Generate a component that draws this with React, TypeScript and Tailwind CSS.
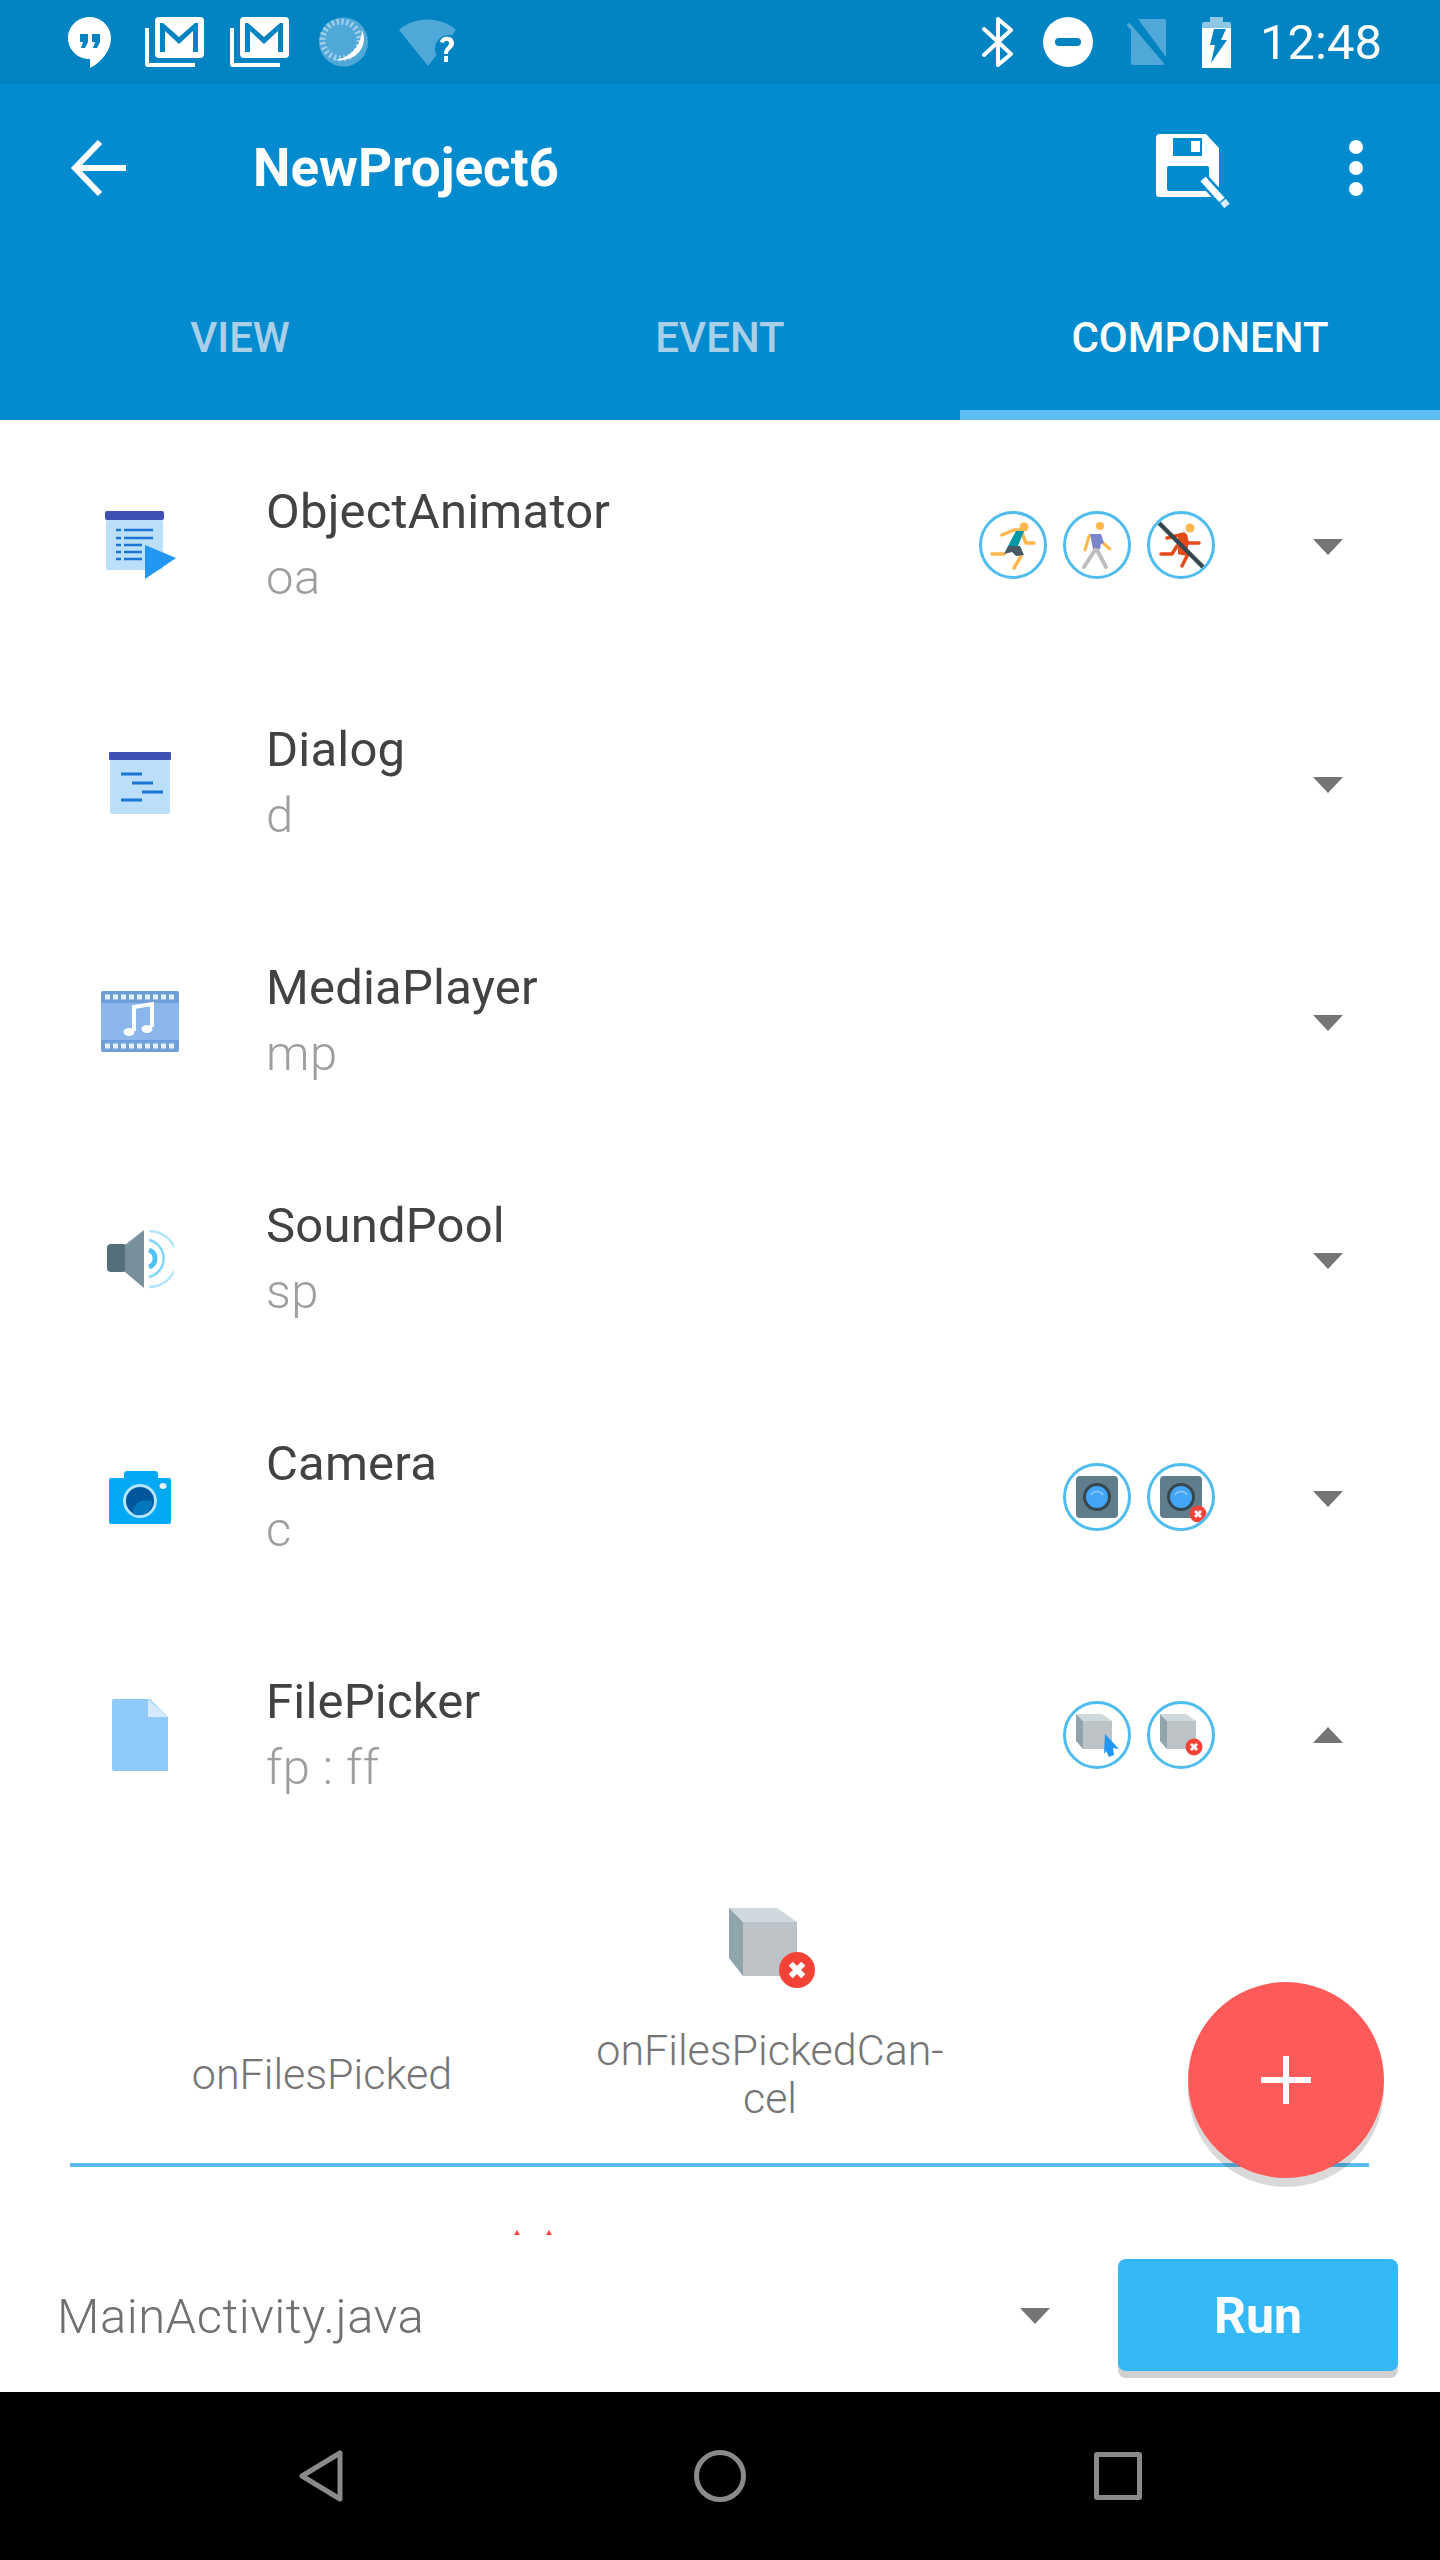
import React from 'react';

const Hangouts = () => (
  <svg width="43" height="51" viewBox="0 0 43 51">
    <path d="M21.5 0C9.6 0 0 9.6 0 21c0 11.6 9.6 21 21 21h1v9c12-6 21-18 21-30C43 9.6 33.400 0 21.500 0z" fill="#fff" />
    <path d="M12 17h8v8l-3 6h-4l2-6h-3zM24 17h8v8l-3 6h-4l2-6h-3z" fill="#0284c3" />
  </svg>
);

const Gmail = () => (
  <svg width="59" height="50" viewBox="0 0 59 50">
    <path d="M0 11h4v35h46v4H3a3 3 0 0 1-3-3z" fill="#fff" />
    <rect x="10" y="0" width="49" height="41" rx="4" fill="#fff" />
    <path d="M15 35V6h3l16 14L50 6h3v29h-5V14L34 27 20 14v21z" fill="#0284c3" />
  </svg>
);

const Sync = () => (
  <svg width="49" height="50" viewBox="0 0 49 50">
    <circle cx="24.500" cy="25" r="24.500" fill="#4fa8d8" />
    <circle cx="22" cy="23" r="18.500" fill="none" stroke="#a3d0ea" strokeWidth="6" strokeDasharray="2.200 2.640" />
    <path d="M43 13C50 28 38 46 15 43C30 42 42 30 43 13z" fill="#fff" />
  </svg>
);

const WifiUnknown = () => (
  <svg width="57" height="47" viewBox="0 0 57 47">
    <path d="M0 11C15 -3 42 -3 57 11L29 47z" fill="#4fa8d8" />
    <circle cx="50" cy="30" r="14" fill="#0284c3" />
    <path d="M41 23c1-7 14-7 14 1 0 6-6 6-6 11h-4c0-7 5-7 5-11 0-3-5-3-5 0z" fill="#fff" />
    <rect x="45" y="37" width="4" height="6" fill="#fff" />
  </svg>
);

const Bluetooth = () => (
  <svg width="31" height="50" viewBox="0 0 31 50" fill="none" stroke="#fff" strokeWidth="4" strokeLinecap="round" strokeLinejoin="round">
    <path d="M2 12l27 25-13 11V2l13 11L2 38" />
  </svg>
);

const Dnd = () => (
  <svg width="50" height="50" viewBox="0 0 50 50">
    <circle cx="25" cy="25" r="25" fill="#fff" />
    <rect x="12" y="21" width="26" height="8" rx="4" fill="#0284c3" />
  </svg>
);

const NoSim = () => (
  <svg width="40" height="46" viewBox="0 0 40 46">
    <path d="M11 0H37a2 2 0 0 1 2 2V38z" fill="#4fa8d8" />
    <path d="M4 8L36 46H6a2 2 0 0 1-2-2z" fill="#4fa8d8" />
    <path d="M1 5l35 41" stroke="#4fa8d8" strokeWidth="3.500" />
  </svg>
);

const Battery = () => (
  <svg width="29" height="51" viewBox="0 0 29 51">
    <path d="M8 0h13v5h6a2 2 0 0 1 2 2v4H0V7a2 2 0 0 1 2-2h6z" fill="#8cc7e5" />
    <path d="M0 11h29v40H0z" fill="#fff" />
    <path d="M12 12h12l-5 11h6L9 46l4-18H8z" fill="#0284c3" />
  </svg>
);

const BackArrow = () => (
  <svg width="56" height="56" viewBox="0 0 56 56" fill="none" stroke="#fff" strokeWidth="6">
    <path d="M56 28H5M30 2 5 28l25 26" />
  </svg>
);

const SaveIcon = () => (
  <svg width="74" height="74" viewBox="0 0 74 74">
    <path d="M4 0h46l13 14v46a3 3 0 0 1-3 3H3a3 3 0 0 1-3-3V4a4 4 0 0 1 4-4z" fill="#fff" />
    <rect x="17" y="4" width="29" height="18" fill="#028bcf" />
    <rect x="35" y="7" width="9" height="11" fill="#fff" />
    <rect x="11" y="32" width="42" height="25" rx="2" fill="#028bcf" />
    <path d="M47 45L71 71" stroke="#028bcf" strokeWidth="12" />
    <path d="M47 45L66 66" stroke="#fff" strokeWidth="7" />
    <path d="M67 67L71 72" stroke="#d6ecf8" strokeWidth="7" />
  </svg>
);

const Ring = ({ children }: { children: React.ReactNode }) => (
  <div className="w-[68px] h-[68px] rounded-full border-[3.5px] border-[#4fbcee] flex items-center justify-center overflow-hidden">
    {children}
  </div>
);

const RedX = ({ x, y, r }: { x: number; y: number; r: number }) => (
  <g>
    <circle cx={x} cy={y} r={r} fill="#f44336" />
    <path
      d={`M${x - r * 0.35} ${y - r * 0.35}L${x + r * 0.35} ${y + r * 0.35}M${x + r * 0.35} ${y - r * 0.35}L${x - r * 0.35} ${y + r * 0.35}`}
      stroke="#fff"
      strokeWidth={r * 0.32}
    />
  </g>
);

const Run = () => (
  <svg width="62" height="62" viewBox="0 0 62 62" fill="none" strokeLinecap="round" strokeLinejoin="round" className="shrink-0">
    <circle cx="42" cy="13" r="4.500" fill="#ffb74d" />
    <path d="M20 21l12-5h6M40 19l4 10h8M10 40h12M39 42l-7 12" stroke="#ffb74d" strokeWidth="3.500" />
    <path d="M34 17h8l-6 15H26z" fill="#0097a7" />
    <path d="M26 32h12l4 9-8 1-4-4-8 2z" fill="#455a64" />
  </svg>
);

const Walk = () => (
  <svg width="62" height="62" viewBox="0 0 62 62" fill="none" strokeLinecap="round" strokeLinejoin="round" className="shrink-0">
    <circle cx="34" cy="12" r="4" fill="#ffb74d" />
    <path d="M23 22l-4 14M37 29l7 6" stroke="#ffb74d" strokeWidth="3" />
    <path d="M24 20h11l3 9-3 1-1 5h-7z" fill="#7986cb" />
    <path d="M29 36l-11 17M31 36l9 17" stroke="#bdbdbd" strokeWidth="4" />
  </svg>
);

const RunOff = () => (
  <svg width="68" height="68" viewBox="0 0 68 68" fill="none" strokeLinecap="round" strokeLinejoin="round" className="-m-[3px] shrink-0">
    <circle cx="43" cy="17" r="4.500" fill="#ffb74d" />
    <path d="M20 27l17-4M40 32h12M14 43h11l5-8M33 42l8 1-6 12" stroke="#e64a19" strokeWidth="3.500" />
    <path d="M31 23h9l2 9-3 11h-8z" fill="#e64a19" />
    <path d="M12 12l45 45" stroke="#37474f" strokeWidth="4.500" strokeLinecap="butt" />
  </svg>
);

const CameraSmall = ({ off }: { off?: boolean }) => (
  <svg width="62" height="62" viewBox="0 0 62 62" className="shrink-0">
    <rect x="10" y="10" width="42" height="42" rx="4" fill="#607d8b" />
    <circle cx="31" cy="31" r="14" fill="#37474f" />
    <circle cx="31" cy="31" r="11" fill="#42a5f5" />
    <path d="M25 29a7 7 0 0 1 12 0" stroke="#90caf9" strokeWidth="1.500" fill="none" />
    {off && <RedX x={48} y={48} r={8.500} />}
  </svg>
);

const Cube = ({ children }: { children?: React.ReactNode }) => (
  <svg width="62" height="62" viewBox="0 0 62 62" className="shrink-0">
    <path d="M10 10h26l10 7H17z" fill="#cfd8dc" />
    <path d="M10 10l7 7v28l-7-8z" fill="#90a4ae" />
    <path d="M17 17h29v28H17z" fill="#bdc3c7" />
    {children}
  </svg>
);

const ObjectAnimatorIcon = () => (
  <svg width="71" height="68" viewBox="0 0 71 68">
    <rect x="1" y="9" width="57" height="50" rx="2" fill="#bbdefb" />
    <rect y="0" width="59" height="9" rx="2" fill="#3f51b5" />
    <path d="M11 19h5M19 19h29M11 27h5M19 27h29M11 34h5M19 34h18M11 41h5M19 41h18M11 48h5M19 48h18" stroke="#1976d2" strokeWidth="2.500" />
    <path d="M40 34l31 13-31 21z" fill="#2196f3" />
  </svg>
);

const DialogIcon = () => (
  <svg width="62" height="62" viewBox="0 0 62 62">
    <rect x="1" y="6" width="60" height="56" rx="2" fill="#bbdefb" />
    <rect y="0" width="62" height="8" rx="1" fill="#3f51b5" />
    <path d="M12 22h21M23 31h21M33 40h21M12 48h21" stroke="#1976d2" strokeWidth="3" />
  </svg>
);

const MediaIcon = () => (
  <svg width="78" height="61" viewBox="0 0 78 61">
    <rect width="78" height="61" rx="2" fill="#6f9fd8" />
    <rect y="12" width="78" height="37" fill="#8ab6ec" />
    <path d="M4 6h72M4 55h72" stroke="#e3effa" strokeWidth="5" strokeDasharray="5 3" />
    <path d="M33 40V16l18-3v23" stroke="#fff" strokeWidth="4" fill="none" />
    <ellipse cx="28" cy="41" rx="5.500" ry="4" fill="#fff" />
    <ellipse cx="46" cy="38" rx="5.500" ry="4" fill="#fff" />
  </svg>
);

const SoundIcon = () => (
  <svg width="67" height="60" viewBox="0 0 67 60">
    <rect y="15" width="20" height="28" rx="4" fill="#546e7a" />
    <path d="M18 16L37 1v58L18 43z" fill="#78909c" />
    <path d="M42 21a9 9 0 0 1 0 17" stroke="#4fc3f7" strokeWidth="5" fill="none" />
    <path d="M42 11a19 19 0 0 1 0 37" stroke="#81d4fa" strokeWidth="2.500" fill="none" />
    <path d="M42 2a28 28 0 0 1 0 56" stroke="#b3e5fc" strokeWidth="2.500" fill="none" />
  </svg>
);

const CameraIcon = () => (
  <svg width="62" height="53" viewBox="0 0 62 53">
    <path d="M15 7V3a3 3 0 0 1 3-3h28a3 3 0 0 1 3 3v4h11a2 2 0 0 1 2 2v42a2 2 0 0 1-2 2H2a2 2 0 0 1-2-2V9a2 2 0 0 1 2-2z" fill="#03a9f4" />
    <circle cx="31" cy="30" r="17" fill="#b3e5fc" />
    <circle cx="31" cy="30" r="14" fill="#01579b" />
    <path d="M24 43c-1-10 8-16 19-13 1 8-8 18-19 13z" fill="#0277bd" />
    <ellipse cx="54" cy="15" rx="3.500" ry="3" fill="#e1f5fe" />
  </svg>
);

const FileIcon = () => (
  <svg width="56" height="72" viewBox="0 0 56 72">
    <path d="M2 0h36l18 18v54H2a2 2 0 0 1-2-2V2a2 2 0 0 1 2-2z" fill="#90caf9" />
    <path d="M36 0l20 18H36z" fill="#d5eafc" />
  </svg>
);

const Caret = ({ up }: { up?: boolean }) => (
  <svg width="30" height="16" viewBox="0 0 30 16">
    <path d={up ? 'M15 0l15 16H0z' : 'M0 0h30L15 16z'} fill="#757575" />
  </svg>
);

const rows = [
  { name: 'ObjectAnimator', sub: 'oa', icon: <ObjectAnimatorIcon />, actions: [<Run />, <Walk />, <RunOff />] },
  { name: 'Dialog', sub: 'd', icon: <DialogIcon />, actions: [] },
  { name: 'MediaPlayer', sub: 'mp', icon: <MediaIcon />, actions: [] },
  { name: 'SoundPool', sub: 'sp', icon: <SoundIcon />, actions: [] },
  { name: 'Camera', sub: 'c', icon: <CameraIcon />, actions: [<CameraSmall />, <CameraSmall off />] },
  {
    name: 'FilePicker',
    sub: 'fp : ff',
    icon: <FileIcon />,
    up: true,
    actions: [
      <Cube>
        <path d="M39 30l14 15-6-1 1 7-5 2-3-6-2 3z" fill="#2196f3" />
      </Cube>,
      <Cube>
        <RedX x={44} y={43} r={8.500} />
      </Cube>,
    ],
  },
];

export default function App() {
  return (
    <div className="relative w-[1440px] h-[2560px] flex flex-col overflow-hidden bg-white font-['Roboto',sans-serif]">
      <div className="h-[84px] bg-[#0284c3] flex items-center shrink-0 pl-[68px] pr-[58px]">
        <Hangouts />
        <div className="ml-[34px]"><Gmail /></div>
        <div className="ml-[26px]"><Gmail /></div>
        <div className="ml-[30px]"><Sync /></div>
        <div className="ml-[31px]"><WifiUnknown /></div>
        <div className="flex-1" />
        <Bluetooth />
        <div className="ml-[30px]"><Dnd /></div>
        <div className="ml-[34px]"><NoSim /></div>
        <div className="ml-[35px]"><Battery /></div>
        <span className="ml-[29px] text-[49px] leading-none text-white">12:48</span>
      </div>

      <div className="h-[168px] bg-[#028bcf] flex items-center shrink-0 pl-[70px] pr-[77px]">
        <BackArrow />
        <span className="ml-[127px] pt-[2px] text-[53px] font-bold text-white flex-1">NewProject6</span>
        <div className="mt-[6px]"><SaveIcon /></div>
        <div className="ml-[119px] flex flex-col gap-[7px]">
          <div className="w-[14px] h-[14px] rounded-full bg-white" />
          <div className="w-[14px] h-[14px] rounded-full bg-white" />
          <div className="w-[14px] h-[14px] rounded-full bg-white" />
        </div>
      </div>

      <div className="h-[168px] bg-[#028bcf] flex shrink-0">
        <div className="w-[480px] pt-[12px] border-b-[10px] border-transparent flex items-center justify-center text-[42px] font-medium text-[#a9cfe9]">VIEW</div>
        <div className="w-[480px] pt-[12px] border-b-[10px] border-transparent flex items-center justify-center text-[42px] font-medium text-[#a9cfe9]">EVENT</div>
        <div className="w-[480px] pt-[12px] border-b-[10px] border-[#5bbdf0] flex items-center justify-center text-[42px] font-medium text-white">COMPONENT</div>
      </div>

      <div className="flex-1 overflow-hidden pt-[6px]">
        {rows.map((row) => (
          <div key={row.name} className="h-[238px] flex items-center pr-[97px]">
            <div className="w-[266px] flex justify-center pl-[14px] shrink-0">{row.icon}</div>
            <div className="flex-1">
              <div className="text-[49px] leading-[66px] tracking-[0.2px] text-[#424242]">{row.name}</div>
              <div className="text-[49px] leading-[66px] font-light tracking-[0.5px] text-[#9e9e9e]">{row.sub}</div>
            </div>
            <div className="flex gap-[16px]">
              {row.actions.map((action, i) => (
                <Ring key={i}>{action}</Ring>
              ))}
            </div>
            <div className={row.up ? 'ml-[98px]' : 'ml-[98px] mt-[3px]'}><Caret up={row.up} /></div>
          </div>
        ))}

        <div className="ml-[70px] mr-[71px] h-[313px] border-b-[4px] border-[#5bbdf0] flex pl-[28px] pt-[54px]">
          <div className="w-[448px] flex flex-col items-center">
            <div className="h-[80px]" />
            <div className="mt-[38px] h-[96px] flex items-center text-center text-[43px] leading-[48px] font-light text-[#757575]">onFilesPicked</div>
          </div>
          <div className="w-[448px] flex flex-col items-center">
            <div className="ml-[4px] w-[86px] h-[80px]">
              <svg width="86" height="80" viewBox="0 0 86 80">
                <path d="M0 0H48L68 14H14z" fill="#cfd8dc" />
                <path d="M0 0L14 14V68L0 50z" fill="#90a4ae" />
                <path d="M14 14H68V68H14z" fill="#bdc3c7" />
                <RedX x={68} y={62} r={18} />
              </svg>
            </div>
            <div className="mt-[38px] h-[96px] text-center text-[43px] leading-[48px] font-light text-[#757575]">
              onFilesPickedCan-
              <br />
              cel
            </div>
          </div>
        </div>

        <div className="mt-[63px] ml-[514px] flex gap-[26px]">
          <svg width="6" height="5" viewBox="0 0 6 5"><path d="M3 0l3 5H0z" fill="#f44336" /></svg>
          <svg width="6" height="5" viewBox="0 0 6 5"><path d="M3 0l3 5H0z" fill="#f44336" /></svg>
        </div>
      </div>

      <div className="absolute left-0 right-0 top-[2235px] h-[157px] bg-white flex items-start pl-[57px] pr-[42px]">
        <span className="mt-[55px] text-[49px] leading-[54px] tracking-[0.5px] font-light text-[#707070] flex-1">MainActivity.java</span>
        <div className="mt-[73px]"><Caret /></div>
        <div className="mt-[24px] ml-[68px] w-[280px] h-[112px] rounded-[8px] bg-[#35b8f7] shadow-[0_7px_0_#d0d0d0] flex items-center justify-center pt-[2px] text-[50px] font-bold text-white">Run</div>
      </div>

      <div className="h-[168px] bg-black flex items-center shrink-0 z-10 relative">
        <div className="ml-[299px]">
          <svg width="44" height="52" viewBox="0 0 44 52" fill="none" stroke="#8a8a8a" strokeWidth="5" strokeLinejoin="round">
            <path d="M41 3v46L3 26z" />
          </svg>
        </div>
        <div className="ml-[351px] w-[52px] h-[52px] rounded-full border-[5px] border-[#8a8a8a]" />
        <div className="ml-[348px] w-[48px] h-[48px] rounded-[3px] border-[5px] border-[#8a8a8a]" />
      </div>

      <div className="absolute left-[1188px] top-[1982px] w-[196px] h-[196px] rounded-full bg-[#ff5a5a] shadow-[0_9px_0_rgba(0,0,0,0.15)] flex items-center justify-center">
        <svg width="50" height="48" viewBox="0 0 50 48">
          <path d="M0 24h50M25 0v48" stroke="#fff" strokeWidth="6" />
        </svg>
      </div>
    </div>
  );
}
